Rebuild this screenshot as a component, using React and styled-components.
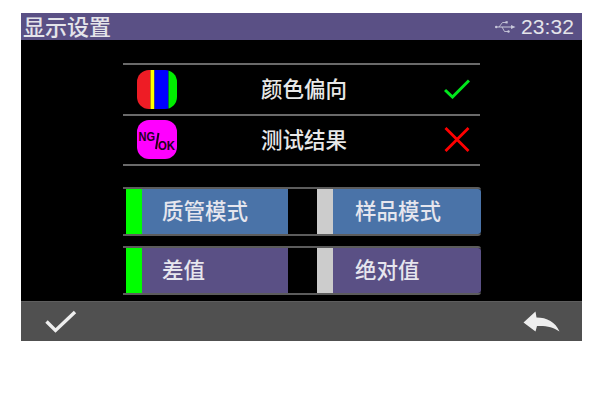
import styled, { createGlobalStyle } from "styled-components";

const GlobalStyle = createGlobalStyle`
  html, body {
    margin: 0;
    background: #fff;
  }
  body {
    font-family: "Noto Sans CJK SC", "Liberation Sans", sans-serif;
  }
`;

const Page = styled.div`
  width: 600px;
  height: 400px;
  padding: 13px 0 0 21px;
  box-sizing: border-box;
  overflow: hidden;
`;

const Screen = styled.div`
  width: 561px;
  height: 328px;
  background: #000;
  display: flex;
  flex-direction: column;
`;

const Header = styled.header`
  height: 27px;
  flex: none;
  background: #5a5085;
  display: flex;
  align-items: center;
  justify-content: space-between;
  padding: 0 8px 0 2px;
  color: #e4e4ea;
`;

const Title = styled.h1`
  margin: -2px 0 0;
  font-size: 22px;
  font-weight: 500;
  line-height: 27px;
`;

const Status = styled.div`
  display: flex;
  align-items: center;
  gap: 5px;
`;

const Clock = styled.span`
  font-family: "Liberation Sans", sans-serif;
  font-size: 21px;
  letter-spacing: 0.1px;
`;

const Content = styled.main`
  flex: 1;
  display: flex;
  flex-direction: column;
  gap: 10px;
  padding: 23px 0 0 102px;
  min-height: 0;
`;

const Rows = styled.div`
  flex: none;
  width: 357px;
  border-bottom: 2px solid #6a6a6a;
  margin-bottom: 11px;
`;

const Row = styled.div`
  height: 48.5px;
  border-top: 2px solid #6a6a6a;
  display: grid;
  grid-template-columns: 40px 1fr 26px;
  align-items: center;
  padding: 0 10px 0 14px;
`;

const RowLabel = styled.span`
  padding-left: 84px;
  font-size: 21.5px;
  font-weight: 500;
  line-height: 30px;
  margin-top: -2px;
  color: #e8e8e8;
`;

const Toggle = styled.div`
  flex: none;
  width: 355px;
  height: 45px;
  border-top: 2px solid #5c5c5c;
  border-bottom: 2px solid #5c5c5c;
  border-radius: 0 3px 3px 0;
  padding-left: 3px;
  display: grid;
  grid-template-columns: 162px 29px 1fr;
`;

const Segment = styled.div`
  display: flex;
  align-items: stretch;
  background: ${({ $bg }) => $bg};
  color: #e6e6ee;
  font-size: 21.5px;
  font-weight: 500;
  border-radius: ${({ $end }) => ($end ? "0 3px 3px 0" : "0")};
`;

const Marker = styled.span`
  width: 16px;
  flex: none;
  background: ${({ $on }) => ($on ? "#00ff00" : "#cccccc")};
`;

const SegmentLabel = styled.span`
  padding-left: ${({ $pad }) => $pad}px;
  line-height: 41px;
`;

const Footer = styled.footer`
  height: 40px;
  flex: none;
  background: #505050;
  border-top: 1px solid #5e5e5e;
  box-sizing: border-box;
  display: flex;
  align-items: center;
  justify-content: space-between;
  padding: 0 22px 0 24px;
`;

const UsbIcon = () => (
  <svg width="21" height="14" viewBox="0 0 21 14" fill="none">
    <path d="M1 7H17" stroke="#c8c8da" strokeWidth="1" />
    <path d="M4 7L7.5 2.5H11M7 7L9.5 11.5H13" stroke="#c8c8da" strokeWidth="0.9" />
    <rect x="10.5" y="1.2" width="2.2" height="2.2" fill="#c8c8da" />
    <circle cx="13.5" cy="11.5" r="1.2" fill="#c8c8da" />
    <path d="M16 5L20.5 7L16 9Z" fill="#c8c8da" />
    <circle cx="1.2" cy="7" r="1.2" fill="#c8c8da" />
  </svg>
);

const ColorIcon = () => (
  <svg width="40" height="39" viewBox="0 0 40 39">
    <defs>
      <clipPath id="colorClip">
        <rect width="40" height="39" rx="12" />
      </clipPath>
    </defs>
    <g clipPath="url(#colorClip)">
      <rect x="0" width="13.5" height="39" fill="#ee1c25" />
      <rect x="13.5" width="4" height="39" fill="#ffff00" />
      <rect x="17.5" width="14" height="39" fill="#0000ff" />
      <rect x="31.5" width="8.5" height="39" fill="#00ee00" />
    </g>
  </svg>
);

const ResultIcon = () => (
  <svg width="40" height="39" viewBox="0 0 40 39">
    <rect width="40" height="39" rx="12" fill="#ff00ff" />
    <g fontFamily="'Liberation Sans', sans-serif" fontWeight="700" fill="#200020">
      <text x="1.5" y="21" fontSize="13" textLength="16.5" lengthAdjust="spacingAndGlyphs">NG</text>
      <text x="21" y="30" fontSize="13" textLength="17" lengthAdjust="spacingAndGlyphs">OK</text>
    </g>
    <path d="M21.5 13L19 29" stroke="#200020" strokeWidth="2" />
  </svg>
);

const CheckMark = () => (
  <svg width="26" height="20" viewBox="0 0 26 20" fill="none">
    <path d="M1 11L8.5 18L25 1.5" stroke="#00e81c" strokeWidth="3" />
  </svg>
);

const CrossMark = () => (
  <svg width="26" height="25" viewBox="0 0 26 25" fill="none">
    <path d="M1.5 1L24.5 24M24.5 1L1.5 24" stroke="#ff0000" strokeWidth="2.8" />
  </svg>
);

const OkIcon = () => (
  <svg width="32" height="23" viewBox="0 0 32 23" fill="none">
    <path d="M1.5 11.5L10.5 20.5L30 2" stroke="#eeeeee" strokeWidth="3.4" />
  </svg>
);

const BackIcon = () => (
  <svg width="37" height="21" viewBox="0 0 37 21">
    <path
      d="M0.5 11.5L12.5 0.5L13.5 6.5C24 6.5 32.5 11 36.5 20.5C30 16 23 14.5 14 15L12.5 20.5Z"
      fill="#eeeeee"
    />
  </svg>
);

const rows = [
  { label: "颜色偏向", icon: <ColorIcon />, mark: <CheckMark /> },
  { label: "测试结果", icon: <ResultIcon />, mark: <CrossMark /> },
];

const toggles = [
  { bg: "#4a73a8", left: "质管模式", right: "样品模式" },
  { bg: "#5a5085", left: "差值", right: "绝对值" },
];

export default function App() {
  return (
    <Page>
      <GlobalStyle />
      <Screen>
        <Header>
          <Title>显示设置</Title>
          <Status>
            <UsbIcon />
            <Clock>23:32</Clock>
          </Status>
        </Header>
        <Content>
          <Rows>
            {rows.map((row) => (
              <Row key={row.label}>
                {row.icon}
                <RowLabel>{row.label}</RowLabel>
                {row.mark}
              </Row>
            ))}
          </Rows>
          {toggles.map((t) => (
            <Toggle key={t.left}>
              <Segment $bg={t.bg}>
                <Marker $on />
                <SegmentLabel $pad={20}>{t.left}</SegmentLabel>
              </Segment>
              <span />
              <Segment $bg={t.bg} $end>
                <Marker />
                <SegmentLabel $pad={22}>{t.right}</SegmentLabel>
              </Segment>
            </Toggle>
          ))}
        </Content>
        <Footer>
          <OkIcon />
          <BackIcon />
        </Footer>
      </Screen>
    </Page>
  );
}
